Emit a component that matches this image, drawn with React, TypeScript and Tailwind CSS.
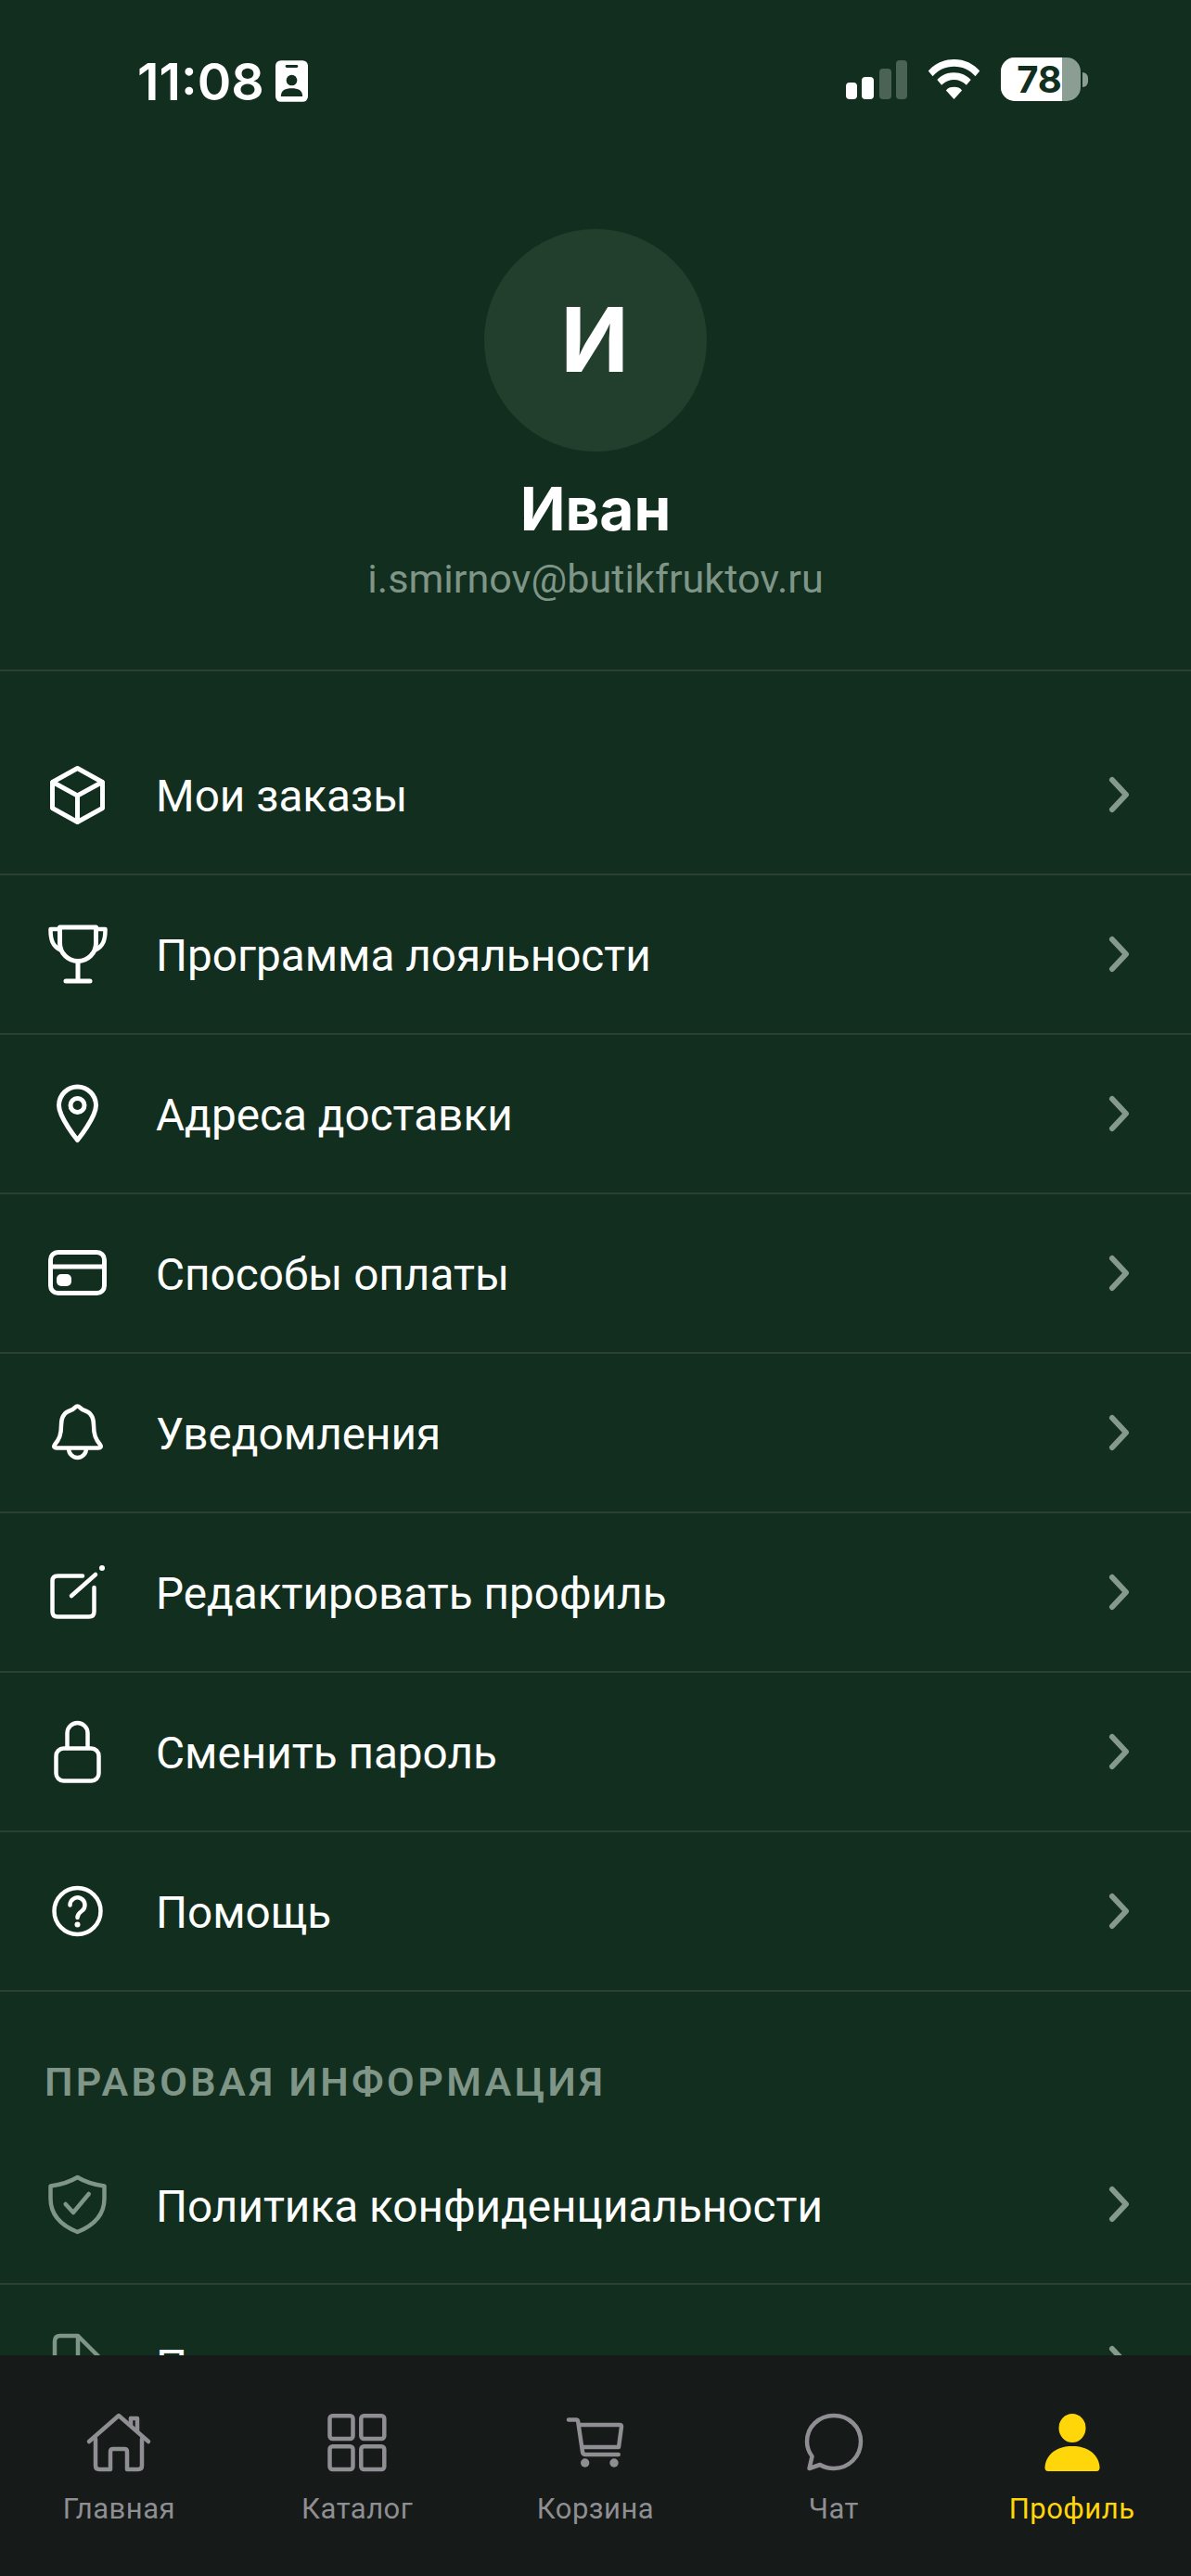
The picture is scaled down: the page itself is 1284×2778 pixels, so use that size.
const sans = "font-['Roboto','Liberation_Sans',sans-serif]";

const Ico = ({ children, className = "text-white" }: { children: React.ReactNode; className?: string }) => (
  <svg viewBox="0 0 72 72" width="72" height="72" fill="none" stroke="currentColor" strokeWidth="5" strokeLinecap="round" strokeLinejoin="round" className={`shrink-0 ${className}`}>
    {children}
  </svg>
);

const Box = () => (
  <Ico>
    <path d="M35.5 7.5 62.5 22.5V50.5L35.5 65.5 8.5 50.5V22.5Z" />
    <path d="M9 22.5 35.5 37 62 22.5M35.5 37V65" />
  </Ico>
);
const Trophy = () => (
  <Ico>
    <path d="M16.5 7H55.5V24A19.5 19.5 0 0 1 16.5 24Z" />
    <path d="M16 9H6.5C6.5 20 8 27 18 32M56 9H65.5C65.5 20 64 27 54 32" strokeWidth="4.5" />
    <path d="M36 44V65M23 65H49" />
  </Ico>
);
const Pin = () => (
  <Ico>
    <path d="M35.5 64.5C35.5 64.5 15.5 40 15.5 27A20 20 0 0 1 55.5 27C55.5 40 35.5 64.5 35.5 64.5Z" />
    <circle cx="35.5" cy="27" r="7.5" />
  </Ico>
);
const Card = () => (
  <Ico>
    <rect x="6.5" y="13.5" width="58" height="44" rx="8" />
    <path d="M6.5 29H64.5" />
    <rect x="13" y="37" width="16" height="13" rx="5" fill="currentColor" stroke="none" />
  </Ico>
);
const Bell = () => (
  <Ico>
    <path d="M35.5 7.5C38 7.5 39 11 43 12 50 14 53 20 53 28 53 38 55 43 60 49 61.5 51 60.5 52.5 58 52.5H13C10.5 52.5 9.5 51 11 49 16 43 18 38 18 28 18 20 21 14 28 12 32 11 33 7.5 35.5 7.5Z" strokeWidth="4.5" />
    <path d="M26 53A9.5 10 0 0 0 45 53" strokeWidth="4.5" />
  </Ico>
);
const Edit = () => (
  <Ico>
    <path d="M41 18.5H14Q8.5 18.5 8.5 24V57Q8.5 62.5 14 62.5H48Q53.5 62.5 53.5 57V31" strokeWidth="4.5" />
    <path d="M29 40 55 17" strokeWidth="4.5" />
    <circle cx="62" cy="10" r="3" fill="currentColor" stroke="none" />
  </Ico>
);
const Lock = () => (
  <Ico>
    <rect x="12.5" y="32.5" width="46" height="35" rx="8" strokeWidth="4.5" />
    <path d="M24.5 32V16A11 11 0 0 1 46.5 16V32" strokeWidth="4.5" />
  </Ico>
);
const Help = () => (
  <Ico>
    <circle cx="35.5" cy="36" r="25" strokeWidth="4.5" />
    <path d="M27.5 29.5A8 8 0 1 1 40 36C37 38 35.5 39.5 35.5 43" strokeWidth="4.5" />
    <circle cx="35.5" cy="50.5" r="3" fill="currentColor" stroke="none" />
  </Ico>
);
const Shield = () => (
  <Ico className="text-[#7f9587]">
    <path d="M35.5 7C43 11.5 53 15 64.5 16.5V30C64.5 47 53 59 35.5 66 18 59 6.5 47 6.5 30V16.5C18 15 28 11.5 35.5 7Z" strokeWidth="4.5" />
    <path d="M22.7 36 31 45 47.7 25" strokeWidth="4.5" />
  </Ico>
);
const Doc = () => (
  <Ico className="text-[#7f9587]">
    <path d="M36 6H17Q11 6 11 12V60Q11 66 17 66H54Q60 66 60 60V30ZM36 6V30H60" strokeWidth="4.5" />
  </Ico>
);

const Chevron = () => (
  <svg viewBox="0 0 24 40" width="24" height="40" fill="none" stroke="#86998d" strokeWidth="6" strokeLinecap="round" strokeLinejoin="round" className="shrink-0">
    <path d="M5 4 20 20 5 36" />
  </svg>
);

const Row = ({ icon, label, nudge = "pt-[3px]" }: { icon: React.ReactNode; label: string; nudge?: string }) => (
  <div className="h-[172px] shrink-0 flex items-center border-b-2 border-[#2a4035] pl-12 pr-[66px]">
    {icon}
    <span className={`ml-12 flex-1 ${nudge} text-[47.7px] leading-[56px] text-white`}>{label}</span>
    <Chevron />
  </div>
);

const Signal = () => (
  <svg width="66" height="42" viewBox="0 0 66 42" className="shrink-0">
    <rect x="0" y="24" width="12" height="18" rx="4" fill="#fff" />
    <rect x="17" y="18" width="13" height="24" rx="4" fill="#fff" />
    <rect x="36" y="9" width="13" height="33" rx="4" fill="#4a6355" />
    <rect x="54" y="0" width="12" height="42" rx="4" fill="#4a6355" />
  </svg>
);

const Wifi = () => (
  <svg width="59" height="44" viewBox="0 0 60 46" fill="#fff" className="shrink-0">
    <path d="M30 0C18 0 8 5 1 13L6 19C12 12 20 8 30 8S48 12 54 19L59 13C52 5 42 0 30 0Z" />
    <path d="M30 15C22 15 16 18 11 23L16 29C20 25 25 23 30 23S40 25 44 29L49 23C44 18 38 15 30 15Z" />
    <path d="M30 31C26 31 23 32 21 35L30 45 39 35C37 32 34 31 30 31Z" />
  </svg>
);

const Battery = () => (
  <div className="flex items-center shrink-0">
    <div className="relative w-[86px] h-[47px] rounded-[15px] bg-[#8b9e93] overflow-hidden">
      <div className="absolute inset-y-0 left-0 w-[66px] bg-white" />
      <span className="absolute inset-0 flex items-center justify-center text-[40px] leading-none font-bold text-[#122e1e] font-['Inter',sans-serif] pr-[3px]">78</span>
    </div>
    <div className="ml-[2px] w-[6px] h-[16px] rounded-r-[6px] bg-[#8b9e93]" />
  </div>
);

const Tab = ({ icon, label, active }: { icon: React.ReactNode; label: string; active?: boolean }) => (
  <div className={`flex-1 flex flex-col items-center ${active ? "text-[#ffd60a]" : "text-[#8e8e93]"}`}>
    {icon}
    <span className="mt-[22px] text-[31px] leading-[36px] tracking-[0.5px]">{label}</span>
  </div>
);

const TabIcon = ({ children }: { children: React.ReactNode }) => (
  <svg width="72" height="64" viewBox="0 0 72 64" fill="none" stroke="currentColor" strokeWidth="4.5" strokeLinecap="round" strokeLinejoin="round" className="shrink-0">
    {children}
  </svg>
);

export default function App() {
  return (
    <div className={`relative w-[1284px] h-[2778px] overflow-hidden bg-[#122e1e] flex flex-col ${sans}`}>
      <div className="h-[174px] shrink-0 flex items-start justify-between pt-[62px] pl-[148px] pr-[111px]">
        <div className="mt-[2px] h-[47px] flex items-center gap-[12px]">
          <span className="text-[55.5px] leading-[47px] font-semibold text-white font-['Inter',sans-serif]">11:08</span>
          <svg width="35" height="47" viewBox="0 0 36 46" className="shrink-0">
            <rect width="36" height="46" rx="6" fill="#fff" />
            <rect x="11" y="5" width="14" height="3" rx="1.5" fill="#122e1e" />
            <circle cx="18" cy="22" r="6" fill="#122e1e" />
            <path d="M6 40C6 33 11 31 18 31S30 33 30 40Z" fill="#122e1e" />
          </svg>
        </div>
        <div className="flex items-center gap-[21px] h-[47px]">
          <Signal />
          <Wifi />
          <Battery />
        </div>
      </div>

      <div className="h-[550px] shrink-0 flex flex-col items-center border-b-2 border-[#2a4035] pt-[73px]">
        <div className="w-[240px] h-[240px] rounded-full bg-[#223f2e] flex items-center justify-center text-white font-['Inter',sans-serif] font-bold text-[96px] leading-none pb-[3px] pr-[2px]">И</div>
        <div className="mt-[23px] text-white font-['Inter',sans-serif] font-bold text-[64px] leading-[78px]">Иван</div>
        <div className="mt-[12px] text-[#7f9587] text-[43.2px] leading-[50px]">i.smirnov@butikfruktov.ru</div>
      </div>

      <div className="pt-12 flex flex-col">
        <Row icon={<Box />} label="Мои заказы" />
        <Row icon={<Trophy />} label="Программа лояльности" />
        <Row icon={<Pin />} label="Адреса доставки" />
        <Row icon={<Card />} label="Способы оплаты" />
        <Row icon={<Bell />} label="Уведомления" />
        <Row icon={<Edit />} label="Редактировать профиль" />
        <Row icon={<Lock />} label="Сменить пароль" />
        <Row icon={<Help />} label="Помощь" />
      </div>

      <div className="pl-12 pt-[72px] pb-[22px] text-[43px] leading-[50px] font-semibold tracking-[3.4px] text-[#7f9587]">ПРАВОВАЯ ИНФОРМАЦИЯ</div>
      <Row icon={<Shield />} label="Политика конфиденциальности" nudge="pt-[5px]" />
      <Row icon={<Doc />} label="Пользовательское соглашение" nudge="pt-[5px]" />

      {/* bottom navigation sits over the scrolling list */}
      <div className="absolute inset-x-0 bottom-0 h-[238px] bg-[#161a18] flex pt-[62px]">
        <Tab
          label="Главная"
          icon={
            <TabIcon>
              <path d="M4 31 36 3 68 31" />
              <path d="M49 6H56V20" />
              <path d="M49 6V13" />
              <path d="M11 28V57Q11 61 15 61H27V42Q27 39 30 39H42Q45 39 45 42V61H57Q61 61 61 57V28" />
            </TabIcon>
          }
        />
        <Tab
          label="Каталог"
          icon={
            <TabIcon>
              <rect x="6.5" y="3.2" width="25" height="24.8" rx="3" />
              <rect x="40.3" y="3.2" width="25" height="24.8" rx="3" />
              <rect x="6.5" y="36.2" width="25" height="24.8" rx="3" />
              <rect x="40.3" y="36.2" width="25" height="24.8" rx="3" />
            </TabIcon>
          }
        />
        <Tab
          label="Корзина"
          icon={
            <TabIcon>
              <path d="M7 7.5H15C16 7.5 17 8 17.2 9.5L22 42C22.4 44 23 45 25 45H60.7" />
              <path d="M19 13H62C63.5 13 64 14 64 15L61 37H22" />
              <circle cx="24.7" cy="54" r="4.7" fill="currentColor" stroke="none" />
              <circle cx="56" cy="54" r="4.7" fill="currentColor" stroke="none" />
            </TabIcon>
          }
        />
        <Tab
          label="Чат"
          icon={
            <TabIcon>
              <path d="M36 3C20 3 7 15 7 31 7 38 9.5 43 12.5 47L9.5 60 21 56C25 58.5 30 60 36 60 52 60 65 47 65 31 65 15 52 3 36 3Z" />
            </TabIcon>
          }
        />
        <Tab
          label="Профиль"
          active
          icon={
            <svg width="72" height="64" viewBox="0 0 72 64" fill="currentColor" className="shrink-0">
              <ellipse cx="36" cy="16.5" rx="14.5" ry="15.5" />
              <path d="M6.5 58C8 44 20 36 36 36S64 44 65.5 58Q66 63 62 63H10Q6 63 6.5 58Z" />
            </svg>
          }
        />
      </div>
    </div>
  );
}
